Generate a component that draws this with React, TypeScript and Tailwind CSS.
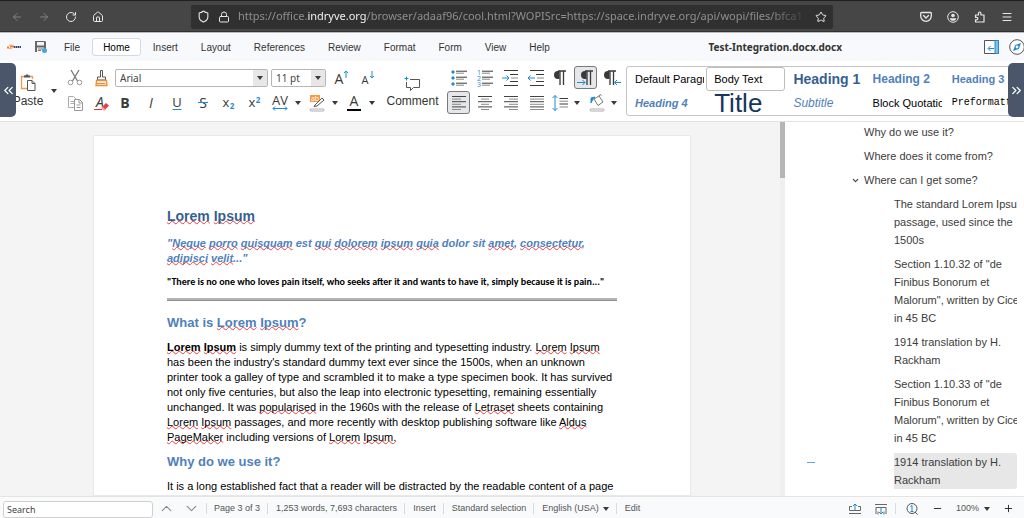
import React from 'react'
import type { ReactNode } from 'react'
import {
  ArrowLeft,
  ArrowRight,
  ChevronDown,
  ChevronUp,
  ChevronsLeft,
  ChevronsRight,
  House,
  Lock,
  Menu,
  Minus,
  Plus,
  RotateCw,
  Shield,
  Star
} from 'lucide-react'

const BLUE = '#1e8bcd'
const DARK = '#3a3a38'

const menuTabs = ['File', 'Home', 'Insert', 'Layout', 'References', 'Review', 'Format', 'Form', 'View', 'Help']

const textStyles = [
  { label: 'Default Paragraph Style', className: 'text-[11px] text-black' },
  { label: 'Body Text', className: 'text-[11px] text-black', active: true },
  { label: 'Heading 1', className: 'text-[14px] font-bold text-[#365f91]' },
  { label: 'Heading 2', className: 'text-[12px] font-bold text-[#4f81bd]' },
  { label: 'Heading 3', className: 'text-[11px] font-bold text-[#4f81bd]' },
  { label: 'Heading 4', className: 'text-[11px] font-bold italic text-[#4f81bd]' },
  { label: 'Title', className: 'text-[26px] text-[#17365d]' },
  { label: 'Subtitle', className: 'text-[12px] italic text-[#4f81bd]' },
  { label: 'Block Quotation', className: 'text-[11px] text-black' },
  { label: 'Preformatted Text', className: "font-['Liberation_Mono',monospace] text-[10px] text-black" }
]

const sections = [
  { lines: ['The standard Lorem Ipsum', 'passage, used since the', '1500s'] },
  { lines: ['Section 1.10.32 of "de', 'Finibus Bonorum et', 'Malorum", written by Cicero', 'in 45 BC'] },
  { lines: ['1914 translation by H.', 'Rackham'] },
  { lines: ['Section 1.10.33 of "de', 'Finibus Bonorum et', 'Malorum", written by Cicero', 'in 45 BC'] },
  { lines: ['1914 translation by H.', 'Rackham'], active: true }
]

function Tool({ label, active, children }: { label: string; active?: boolean; children: ReactNode }) {
  return (
    <button
      aria-label={label}
      className={`flex h-[23px] w-[23px] shrink-0 items-center justify-center rounded-[3px] ${
        active ? 'border border-[#76797f] bg-[#e6e7e8]' : ''
      }`}
    >
      {children}
    </button>
  )
}

function Caret() {
  return (
    <svg width="6" height="4" viewBox="0 0 6 4" className="shrink-0">
      <path d="M0 0h6L3 4z" fill={DARK} />
    </svg>
  )
}

function MenuCaret({ label }: { label: string }) {
  return (
    <button aria-label={label} className="flex h-[23px] w-2.5 shrink-0 items-center justify-center">
      <Caret />
    </button>
  )
}

function Icon({ size = 18, children }: { size?: number; children: ReactNode }) {
  return (
    <svg width={size} height={size} viewBox="0 0 18 18" fill="none" stroke={DARK} className="shrink-0 overflow-visible">
      {children}
    </svg>
  )
}

function Letter({ x, y, size, weight = 400, italic, fill = DARK, children }: {
  x: number
  y: number
  size: number
  weight?: number
  italic?: boolean
  fill?: string
  children: ReactNode
}) {
  return (
    <text
      x={x}
      y={y}
      fontSize={size}
      fontWeight={weight}
      fontStyle={italic ? 'italic' : 'normal'}
      textAnchor="middle"
      fill={fill}
      stroke="none"
      fontFamily="'Open Sans', sans-serif"
    >
      {children}
    </text>
  )
}

function AlignLines({ rows }: { rows: [number, number][] }) {
  return (
    <Icon>
      {rows.map(([from, to], i) => (
        <path key={i} d={`M${from} ${2.5 + i * 2.6}H${to}`} stroke={i % 2 ? '#8b8b8b' : '#444'} />
      ))}
    </Icon>
  )
}

function Pilcrow({ x = 0 }: { x?: number }) {
  return (
    <g transform={`translate(${x} 0)`}>
      <path d="M10 2H7a4 4 0 0 0 0 8h1.500V2z" fill={DARK} stroke="none" />
      <path d="M7 2h8M9 2v14M12.500 2v14" strokeWidth="1.300" />
    </g>
  )
}

function BrowserBar() {
  return (
    <header className="flex h-[33px] shrink-0 items-center border-b border-t border-b-[#b9babd] border-t-[#202020] bg-[#464646] text-[#e8e8e8] shadow-[inset_0_-1px_0_#303030]">
      <div className="flex shrink-0 items-center gap-[15px] pl-[11px]">
        <button aria-label="Back" className="text-[#828282]"><ArrowLeft size={12} /></button>
        <button aria-label="Forward" className="text-[#828282]"><ArrowRight size={12} /></button>
        <button aria-label="Reload"><RotateCw size={12} /></button>
        <button aria-label="Home page"><House size={12} /></button>
      </div>
      <div className="ml-[87px] flex h-6 min-w-0 flex-1 items-center rounded-[3px] bg-[#303030] pl-1.5">
        <Shield size={13} className="shrink-0" />
        <Lock size={12} className="ml-2 shrink-0" />
        <div className="ml-2 min-w-0 flex-1 overflow-hidden whitespace-nowrap font-['Noto_Sans',sans-serif] text-[11px] text-[#8f8f8f] [mask-image:linear-gradient(to_right,#000_93%,transparent)]">
          https://office.<span className="text-[#f0f0f0]">indryve.org</span>
          /browser/adaaf96/cool.html?WOPISrc=https://space.indryve.org/api/wopi/files/bfca1
        </div>
        <button aria-label="Bookmark this page" className="mx-1.5"><Star size={12} /></button>
      </div>
      <div className="ml-[87px] mr-[11px] flex shrink-0 items-center gap-[15px]">
        <button aria-label="Pocket">
          <svg width="12" height="12" viewBox="0 0 12 12" fill="none" stroke="currentColor" strokeWidth="1.300" strokeLinecap="round">
            <path d="M1.500 1.500h9a.8.8 0 0 1 .8.8V5a5.300 5.300 0 0 1-10.600 0V2.300a.8.8 0 0 1 .8-.8zM3.500 4.500 6 7l2.500-2.500" />
          </svg>
        </button>
        <button aria-label="Account">
          <svg width="12" height="12" viewBox="0 0 12 12" fill="none" stroke="currentColor">
            <circle cx="6" cy="6" r="5.300" />
            <circle cx="6" cy="4.500" r="1.800" fill="currentColor" stroke="none" />
            <path d="M2.800 7.200h6.400C9 9.200 7.500 9.800 6 9.800S3 9.200 2.800 7.200z" fill="currentColor" stroke="none" />
          </svg>
        </button>
        <button aria-label="Extensions">
          <svg width="12" height="12" viewBox="0 0 12 12" fill="none" stroke="currentColor" strokeWidth="1.200" strokeLinejoin="round">
            <path d="M1.500 4h3V2.200a1.200 1.200 0 0 1 2.400 0V4H10v7H1.500V8.800h1.200a1.200 1.200 0 0 0 0-2.400H1.500z" />
          </svg>
        </button>
        <button aria-label="Browser menu"><Menu size={12} /></button>
      </div>
    </header>
  )
}

function MenuBar() {
  return (
    <div className="flex h-7 shrink-0 items-center overflow-hidden bg-[#f8f9fc] text-[10px] text-[#333]">
      <svg width="14" height="6" viewBox="0 0 14 6" className="ml-[7px] shrink-0">
        <path d="M0 3.500h2M3 2.500h4" stroke="#f47b30" strokeWidth="1.800" />
        <path d="M2 1.200h4M2 4.600h3" stroke="#f9a66c" />
        <path d="M7 3h7" stroke="#33407a" strokeWidth="1.800" strokeDasharray="1.500 .5" />
      </svg>
      <button aria-label="Save" className="ml-[14px] mr-[6px]">
        <svg width="12" height="12" viewBox="0 0 12 12" className="block">
          <path d="M0 0h10l1 1v10H0z" fill="#666" />
          <path d="M2 1h7v3.500H2zM2 6.500h7V11H2z" fill="#f4f4f4" />
          <path d="M3 8h5M3 9.500h3" stroke="#777" />
          <circle cx="9.500" cy="9.500" r="2.500" fill="#4aa3df" />
        </svg>
      </button>
      <nav className="flex shrink-0 items-center gap-px">
        {menuTabs.map((tab) => (
          <button
            key={tab}
            className={`h-[18px] rounded-[3px] border px-2.5 ${
              tab === 'Home' ? 'border-[#d8d9dc] bg-white text-black' : 'border-transparent'
            }`}
          >
            {tab}
          </button>
        ))}
      </nav>
      <h1 className="ml-auto mr-[142px] whitespace-nowrap font-['Noto_Sans',sans-serif] text-[10px] font-bold">
        Test-Integration.docx.docx
      </h1>
      <button aria-label="Sidebar" className="mr-[10px] shrink-0">
        <svg width="15" height="14" viewBox="0 0 15 14" fill="none" className="block">
          <path d="M.5.5h14v13H.5z" fill="#fff" stroke="#555" />
          <path d="M11 .5h3.500v13H11z" fill="#83beec" stroke={BLUE} />
          <path d="M10 8.500H4.500M6.500 6 4 8.500 6.500 11" stroke={BLUE} />
        </svg>
      </button>
      <button aria-label="Navigator" className="shrink-0">
        <svg width="15" height="16" viewBox="0 0 15 16" fill="none" className="block">
          <circle cx="8" cy="8" r="7.300" fill="#fff" stroke="#555" />
          <path d="m12 4-2.200 6L4 12l2.200-6z" fill={BLUE} />
          <circle cx="8" cy="8" r="1.400" fill="#fff" />
        </svg>
      </button>
    </div>
  )
}

function ClipboardGroup() {
  return (
    <>
      <button className="ml-[13px] flex w-[30px] shrink-0 flex-col items-center pt-2 text-[12px] leading-[14px] text-[#333]">
        <svg width="16" height="18" viewBox="0 0 16 18" fill="none" className="mb-0.5">
          <path d="M5 2.500H1.500v12H7M9 2.500h3.500V5" stroke="#ef9a4a" strokeWidth="1.300" />
          <path d="M4 3.500v-2h1.500l.5-1h2l.5 1H10v2z" fill="#555" />
          <path d="M7.500 6.500h4.500l3 3v7H7.500zM12 6.500v3h3" fill="#fff" stroke="#555" />
        </svg>
        Paste
      </button>
      <button aria-label="Paste options" className="ml-2 mr-[5px] flex h-[49px] w-[7px] shrink-0 items-center">
        <Caret />
      </button>
      <div className="flex shrink-0 flex-col gap-0.5">
        <div className="flex gap-[3px]">
          <Tool label="Cut">
            <Icon>
              <path d="m5 1 6.500 11M13 1 6.500 12" stroke="#777" strokeWidth="1.300" />
              <circle cx="4.500" cy="13.500" r="2.300" stroke="#999" />
              <circle cx="13.500" cy="13.500" r="2.300" stroke="#999" />
            </Icon>
          </Tool>
          <Tool label="Clone formatting">
            <Icon>
              <path d="M8.500 1.500h2V8h3v3h-8V8h3z" stroke="#555" />
              <path d="M4.500 11.500h10l.5 5H4z" fill="#fff" stroke="#ee8d36" strokeWidth="1.300" />
              <path d="M4.500 14.500h9" stroke="#ee8d36" strokeWidth="1.300" />
            </Icon>
          </Tool>
        </div>
        <div className="flex gap-[3px]">
          <Tool label="Copy">
            <Icon>
              <path d="M2.500 2.500h5l3 3v8h-8zM4.500 7.500h4M4.500 9.500h4" fill="#fff" stroke="#aaa" />
              <path d="M8.500 5.500h5l3 3v8h-8zM13 5.500v3.500h3.500M10.500 11h4M10.500 13.500h4" fill="#fff" stroke="#999" />
            </Icon>
          </Tool>
          <Tool label="Clear formatting">
            <Icon>
              <Letter x={8} y={13} size={14} italic>A</Letter>
              <path d="M2 15.500h8" stroke="#d33" />
              <path d="m10 13 4-4 3 2.500-4 4.500z" fill="#e04444" stroke="none" />
              <path d="m9 14 1.500-1.500 3 3L12 17z" fill="#f3a0a0" stroke="none" />
            </Icon>
          </Tool>
        </div>
      </div>
    </>
  )
}

function SelectBox({ label, value, className }: { label: string; value: string; className: string }) {
  return (
    <div className={`relative shrink-0 ${className}`}>
      <select
        aria-label={label}
        defaultValue={value}
        className="block h-[18px] w-full appearance-none rounded-[2px] border border-[#b6b6b6] bg-white pl-1 font-['Noto_Sans',sans-serif] text-[10px] leading-4 text-[#444]"
      >
        <option>{value}</option>
      </select>
      <span className="pointer-events-none absolute bottom-px right-px top-px flex w-[14px] items-center justify-center bg-[#e7e7e7]">
        <Caret />
      </span>
    </div>
  )
}

function FontGroup() {
  return (
    <div className="flex shrink-0 flex-col gap-0.5">
      <div className="flex h-[23px] items-center gap-[3px] pl-[3px]">
        <SelectBox label="Font name" value="Arial" className="w-[153px]" />
        <SelectBox label="Font size" value="11 pt" className="w-[55px]" />
        <div className="flex gap-[3px]">
          <Tool label="Increase size">
            <Icon>
              <Letter x={7} y={15} size={14}>A</Letter>
              <path d="M14 9V2M12 4l2-2 2 2" stroke={BLUE} />
            </Icon>
          </Tool>
          <Tool label="Decrease size">
            <Icon>
              <Letter x={7} y={15} size={11}>A</Letter>
              <path d="M14 2v7M12 7l2 2 2-2" stroke={BLUE} />
            </Icon>
          </Tool>
        </div>
      </div>
      <div className="flex gap-[3px] pl-px">
        <Tool label="Bold"><Icon><Letter x={9} y={14} size={14} weight={700}>B</Letter></Icon></Tool>
        <Tool label="Italic"><Icon><Letter x={9} y={14} size={14} italic>I</Letter></Icon></Tool>
        <Tool label="Underline">
          <Icon>
            <Letter x={9} y={13} size={13}>U</Letter>
            <path d="M4.500 15.500h9" stroke={BLUE} />
          </Icon>
        </Tool>
        <Tool label="Strikethrough">
          <Icon>
            <Letter x={9} y={14} size={14}>S</Letter>
            <path d="M4 8.500h10" stroke={BLUE} />
          </Icon>
        </Tool>
        <Tool label="Subscript">
          <Icon>
            <Letter x={6} y={13} size={13}>x</Letter>
            <Letter x={12} y={15} size={8} weight={700} fill={BLUE}>2</Letter>
          </Icon>
        </Tool>
        <Tool label="Superscript">
          <Icon>
            <Letter x={6} y={13} size={13}>x</Letter>
            <Letter x={12} y={9} size={8} weight={700} fill={BLUE}>2</Letter>
          </Icon>
        </Tool>
        <div className="flex gap-px">
          <Tool label="Character spacing">
            <Icon>
              <Letter x={8} y={11} size={13}>AV</Letter>
              <path d="M1 14.500h14M3 12.500l-2 2 2 2M13 12.500l2 2-2 2" stroke={BLUE} />
            </Icon>
          </Tool>
          <MenuCaret label="Character spacing options" />
        </div>
        <div className="flex gap-px">
          <Tool label="Highlighting">
            <Icon>
              <path d="M1 1h10v7H1z" fill="#fa9a40" stroke="none" />
              <Letter x={6} y={7} size={7} fill="#fff">ab</Letter>
              <path d="m6 11 7-7 2 2-7 6-3 .5z" fill="#fff" stroke="#555" />
              <rect x="1" y="15" width="14" height="2" rx="1" fill="#fff" stroke="#999" strokeWidth=".8" />
            </Icon>
          </Tool>
          <MenuCaret label="Highlighting options" />
        </div>
        <div className="flex gap-px">
          <Tool label="Font color">
            <Icon>
              <Letter x={8} y={12} size={14}>A</Letter>
              <path d="M1 16h14" stroke="#000" strokeWidth="2" />
            </Icon>
          </Tool>
          <MenuCaret label="Font color options" />
        </div>
      </div>
    </div>
  )
}

function ParagraphGroup() {
  const ys = [3, 9, 15]
  return (
    <div className="flex shrink-0 flex-col gap-0.5">
      <div className="flex">
        <div className="flex gap-[3px]">
          <Tool label="Bullets">
            <Icon>
              {ys.map((y) => (
                <g key={y}>
                  <circle cx="3" cy={y} r="1.200" fill={BLUE} stroke={BLUE} />
                  <path d={`M6 ${y - 0.8}h11`} />
                  <path d={`M6 ${y + 1.2}h8`} stroke="#888" />
                </g>
              ))}
            </Icon>
          </Tool>
          <Tool label="Numbering">
            <Icon>
              {ys.map((y, i) => (
                <g key={y}>
                  <Letter x={3} y={y + 3} size={7} fill={BLUE}>{i + 1}</Letter>
                  <path d={`M6 ${y - 0.8}h11`} />
                  <path d={`M6 ${y + 1.2}h8`} stroke="#888" />
                </g>
              ))}
            </Icon>
          </Tool>
          <Tool label="Increase indent">
            <Icon>
              <path d="M2 1.500h14M8 5.500h8M8 12.500h8M2 16.500h14" />
              <path d="M9 9h7" stroke="#888" />
              <path d="M0 9h7M4.500 6.500 7 9l-2.500 2.500" stroke={BLUE} />
            </Icon>
          </Tool>
          <Tool label="Decrease indent">
            <Icon>
              <path d="M2 1.500h14M8 5.500h8M8 12.500h8M2 16.500h14" />
              <path d="M9 9h7" stroke="#888" />
              <path d="M7 9H0M2.500 6.500 0 9l2.500 2.500" stroke={BLUE} />
            </Icon>
          </Tool>
        </div>
        <div className="flex gap-[3px]">
          <Tool label="Formatting marks"><Icon><Pilcrow /></Icon></Tool>
          <Tool label="Left to right" active>
            <Icon>
              <Pilcrow x={1} />
              <path d="M0 13.500h8M5.500 11 8 13.500 5.500 16" stroke={BLUE} />
            </Icon>
          </Tool>
          <Tool label="Right to left">
            <Icon>
              <Pilcrow x={-2} />
              <path d="M18 13.500h-6M14 11l-2.500 2.500L14 16" stroke={BLUE} />
            </Icon>
          </Tool>
        </div>
      </div>
      <div className="flex">
        <div className="flex gap-[3px]">
          <Tool label="Align left" active>
            <AlignLines rows={[[2, 16], [2, 11], [2, 16], [2, 11], [2, 16], [2, 11]]} />
          </Tool>
          <Tool label="Align center">
            <AlignLines rows={[[2, 16], [5, 13], [2, 16], [5, 13], [2, 16], [5, 13]]} />
          </Tool>
          <Tool label="Align right">
            <AlignLines rows={[[2, 16], [7, 16], [2, 16], [7, 16], [2, 16], [7, 16]]} />
          </Tool>
          <Tool label="Justify">
            <AlignLines rows={[[2, 16], [2, 16], [2, 16], [2, 16], [2, 16], [2, 16]]} />
          </Tool>
        </div>
        <div className="flex gap-[3px]">
          <div className="flex gap-px">
            <Tool label="Line spacing">
              <Icon>
                <path d="M4 1.500v15M1.500 4 4 1.500 6.500 4M1.500 14 4 16.500 6.500 14" stroke={BLUE} />
                <path d="M8.500 4.500H17M8.500 10H17" />
                <path d="M8.500 7.200H17M8.500 13H17" stroke="#888" />
              </Icon>
            </Tool>
            <MenuCaret label="Line spacing options" />
          </div>
          <div className="flex gap-px">
            <Tool label="Background color">
              <Icon>
                <path d="M3 9V4l4-1-2.500 3z" fill={BLUE} stroke={BLUE} />
                <path d="m6 5 5-3 4 6-5 3.500zM11 2l1-1.500 1.500 1" fill="#fff" stroke="#777" />
                <rect x="2" y="15" width="14" height="2" rx="1" fill="#fff" stroke="#999" strokeWidth=".8" />
              </Icon>
            </Tool>
            <MenuCaret label="Background color options" />
          </div>
        </div>
      </div>
    </div>
  )
}

function Toolbar() {
  return (
    <div className="relative flex h-[61px] shrink-0 overflow-hidden border-b border-[#e2e2e2] bg-white pt-[5px]">
      <ClipboardGroup />
      <FontGroup />
      <button className="flex w-[69px] shrink-0 flex-col items-center pt-[10px] text-[12px] leading-[14px] text-[#333]">
        <svg width="17" height="16" viewBox="0 0 17 16" fill="none" className="mb-0.5">
          <path d="M6 3.500h9.500v8h-6l-3 3v-3h-4V6" stroke="#555" />
          <path d="M2.500.5v4M.5 2.500h4" stroke={BLUE} />
        </svg>
        Comment
      </button>
      <ParagraphGroup />
      <div className="ml-[3px] grid h-[50px] min-w-0 flex-1 grid-cols-5 grid-rows-2 overflow-hidden rounded-[3px] border border-[#c4c4c4]">
        {textStyles.map((style) => (
          <button
            key={style.label}
            className={`flex h-6 min-w-0 items-center rounded-[3px] border pl-[7px] pr-px text-left ${
              style.active ? 'border-[#bdbdbd]' : 'border-transparent'
            }`}
          >
            <span className={`h-full flex-1 overflow-hidden whitespace-nowrap leading-[22px] ${style.className}`}>
              {style.label}
            </span>
          </button>
        ))}
      </div>
      <button
        aria-label="Scroll left"
        className="absolute left-0 top-0.5 flex h-[54px] w-4 items-center justify-center rounded-r-[5px] bg-[#4b566a] text-white"
      >
        <ChevronsLeft size={15} strokeWidth={2} />
      </button>
      <button
        aria-label="Scroll right"
        className="absolute right-0 top-0.5 flex h-[54px] w-4 items-center justify-center rounded-l-[5px] bg-[#4b566a] text-white"
      >
        <ChevronsRight size={15} strokeWidth={2} />
      </button>
    </div>
  )
}

// Word flagged by the spell checker
function Typo({ children }: { children: ReactNode }) {
  return (
    <span className="underline decoration-[#f03c3c] decoration-wavy decoration-1 underline-offset-[-1px] [text-decoration-skip-ink:none]">
      {children}
    </span>
  )
}

function DocumentPage() {
  return (
    <main className="flex min-w-0 flex-1 overflow-hidden bg-[#f4f4f4]">
      <div className="flex min-w-0 flex-1 justify-center overflow-hidden pl-1 pt-[13px]">
        <article className="w-[598px] shrink-0 border border-[#e8e8e8] bg-white px-[73px] pt-[72px] text-[11px] leading-[15px] text-black">
          <h2 className="text-[14px] font-bold leading-4 text-[#365f91]">
            <Typo>Lorem</Typo> <Typo>Ipsum</Typo>
          </h2>
          <h4 className="mt-3 font-bold italic text-[#4f81bd]">
            "<Typo>Neque</Typo> <Typo>porro</Typo> <Typo>quisquam</Typo> est <Typo>qui</Typo> <Typo>dolorem</Typo>{' '}
            <Typo>ipsum</Typo> <Typo>quia</Typo> dolor sit <Typo>amet</Typo>, <Typo>consectetur</Typo>,{' '}
            <Typo>adipisci</Typo> <Typo>velit</Typo>..."
          </h4>
          <h5 className="mt-[9px] whitespace-nowrap font-['Carlito','Lato',sans-serif] text-[10px] font-bold leading-[14px]">
            "There is no one who loves pain itself, who seeks after it and wants to have it, simply because it is pain..."
          </h5>
          <hr className="mt-[9px] h-[3px] border-b border-t-0 border-[#8f8f8f] bg-[#b4b4b4]" />
          <h3 className="mt-[14px] text-[13px] font-bold leading-4 text-[#4f81bd]">
            What is <Typo>Lorem</Typo> <Typo>Ipsum</Typo>?
          </h3>
          <p className="mt-[9px]">
            <b><Typo>Lorem</Typo> <Typo>Ipsum</Typo></b> is simply dummy text of the printing and typesetting industry.{' '}
            <Typo>Lorem</Typo> <Typo>Ipsum</Typo> has been the industry's standard dummy text ever since the 1500s, when an
            unknown printer took a galley of type and scrambled it to make a type specimen book. It has survived not only
            five centuries, but also the leap into electronic typesetting, remaining essentially unchanged. It was{' '}
            <Typo>popularised</Typo> in the 1960s with the release of <Typo>Letraset</Typo> sheets containing{' '}
            <Typo>Lorem</Typo> <Typo>Ipsum</Typo> passages, and more recently with desktop publishing software like{' '}
            <Typo>Aldus</Typo> <Typo>PageMaker</Typo> including versions of <Typo>Lorem</Typo> <Typo>Ipsum.</Typo>
          </p>
          <h3 className="mt-[9px] text-[13px] font-bold leading-4 text-[#4f81bd]">Why do we use it?</h3>
          <p className="mt-[9px]">
            It is a long established fact that a reader will be distracted by the readable content of a page
          </p>
        </article>
      </div>
      <div className="w-[5px] shrink-0 bg-[#f0f0f0]">
        <div className="h-14 bg-[#b5b7b7]" />
      </div>
    </main>
  )
}

function Navigator() {
  return (
    <nav className="w-[239px] shrink-0 overflow-hidden bg-white pr-[7px] pt-px text-[11px] leading-[18px] text-[#3c3c3c]">
      <ul className="flex flex-col gap-1.5">
        <li className="pl-[79px]"><a href="#use">Why do we use it?</a></li>
        <li className="pl-[79px]"><a href="#origin">Where does it come from?</a></li>
        <li>
          <div className="flex items-center gap-[3px] pl-[66px]">
            <button aria-label="Collapse" className="w-2.5"><ChevronDown size={9} strokeWidth={3} /></button>
            <a href="#get">Where can I get some?</a>
          </div>
          <ul className="mt-1.5 flex flex-col gap-1.5">
            {sections.map((section, i) => (
              <li key={i} className={`flex ${section.active ? 'gap-[79px] pl-[22px]' : 'pl-[109px]'}`}>
                {section.active && <span className="mt-[9px] h-px w-2 shrink-0 bg-[#5fa8df]" />}
                <a
                  href={`#section-${i}`}
                  className={`min-w-0 flex-1 overflow-hidden whitespace-nowrap ${
                    section.active ? 'rounded-r-[3px] bg-[#e7e7e7]' : ''
                  }`}
                >
                  {section.lines.map((line) => (
                    <span key={line} className="block">{line}</span>
                  ))}
                </a>
              </li>
            ))}
          </ul>
        </li>
      </ul>
    </nav>
  )
}

function Separator() {
  return <span className="ml-[7px] mr-2 h-[11px] w-px shrink-0 bg-[#d8dade]" />
}

function StatusBar() {
  return (
    <footer className="flex h-[22px] shrink-0 items-center overflow-hidden whitespace-nowrap border-t border-[#e6e2de] bg-[#f8fafc] text-[9px] text-[#555]">
      <input
        aria-label="Search"
        placeholder="Search"
        className="ml-[3px] mt-1 h-[17px] w-[150px] shrink-0 rounded-[3px] border border-[#d0d0d0] bg-white px-[3px] font-['Noto_Sans',sans-serif] text-[9px] placeholder:text-[#444]"
      />
      <div className="flex h-full min-w-0 flex-1 items-center pt-0.5">
        <button aria-label="Previous match" className="ml-[5px] text-[#8a8a8a]"><ChevronUp size={17} strokeWidth={1.5} /></button>
        <button aria-label="Next match" className="ml-2 text-[#8a8a8a]"><ChevronDown size={17} strokeWidth={1.5} /></button>
        <span className="ml-1.5 mr-[7px] h-[11px] w-px shrink-0 bg-[#d8dade]" />
        <span>Page 3 of 3</span>
        <Separator />
        <span>1,253 words, 7,693 characters</span>
        <Separator />
        <button>Insert</button>
        <Separator />
        <button>Standard selection</button>
        <Separator />
        <button className="flex items-center gap-1">English (USA) <Caret /></button>
        <Separator />
        <button>Edit</button>
        <button aria-label="Header" className="ml-auto">
          <svg width="12" height="12" viewBox="0 0 12 12" fill="none" stroke="#666" className="block">
            <path d="M3 3.500H.5v4h11v-4H9M0 10.500h12" />
            <path d="M6 7V1M4 3l2-2 2 2" stroke={BLUE} />
          </svg>
        </button>
        <button aria-label="Footer" className="ml-[14px]">
          <svg width="12" height="12" viewBox="0 0 12 12" fill="none" stroke="#666" className="block">
            <path d="M0 1.500h12M3 8.500v3M9 8.500v3M1 11V4.500h10V11" />
            <path d="M6 5v6M4 9l2 2 2-2" stroke={BLUE} />
          </svg>
        </button>
        <span className="ml-2 mr-[10px] h-[11px] w-px shrink-0 bg-[#d8dade]" />
        <button aria-label="Reset zoom">
          <svg width="12" height="12" viewBox="0 0 12 12" fill="none" stroke="#555" className="block">
            <circle cx="6" cy="5.500" r="5" />
            <path d="m9 9 2.500 2.500" />
            <path d="M4.500 3.500 6 2.500V8M4.500 8.500h3" stroke={BLUE} />
          </svg>
        </button>
        <button aria-label="Zoom out" className="ml-[14px] text-[#222]"><Minus size={11} /></button>
        <button className="ml-[13px] flex items-center gap-[5px]">100% <Caret /></button>
        <button aria-label="Zoom in" className="ml-[13px] mr-[10px] text-[#222]"><Plus size={11} /></button>
      </div>
    </footer>
  )
}

export default function App() {
  return (
    <div className="flex h-screen flex-col overflow-hidden bg-white font-['Liberation_Sans',Arial,sans-serif]">
      <BrowserBar />
      <MenuBar />
      <Toolbar />
      <div className="flex min-h-0 flex-1">
        <DocumentPage />
        <Navigator />
      </div>
      <StatusBar />
    </div>
  )
}
